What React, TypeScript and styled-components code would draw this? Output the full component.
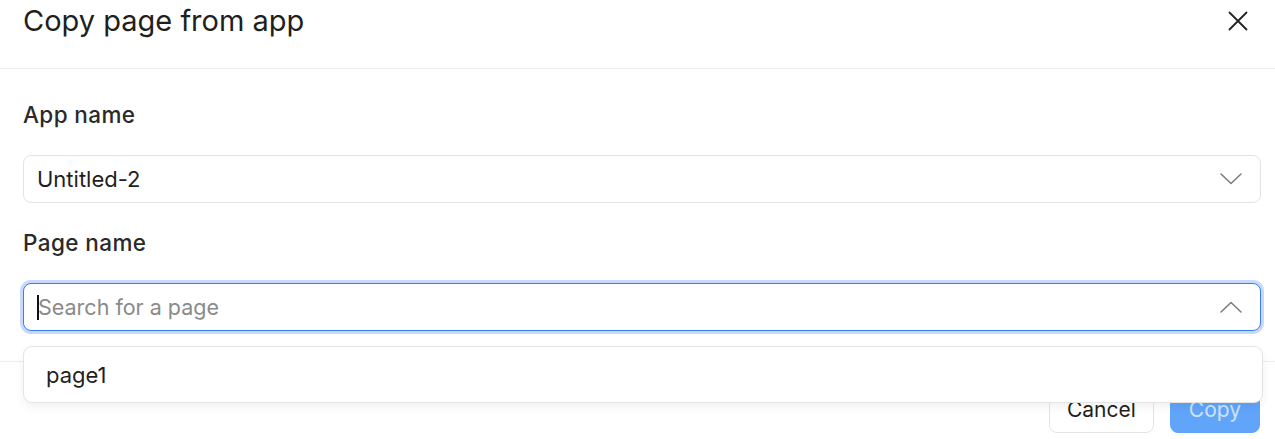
import styled, { createGlobalStyle } from 'styled-components';

const Global = createGlobalStyle`
  html, body {
    margin: 0;
    padding: 0;
    background: #ffffff;
  }
  body {
    font-family: Inter, 'Noto Sans', 'Liberation Sans', sans-serif;
    color: #1f1f1f;
  }
`;

// ─── Layout ──────────────────────────────────────────────────────────────────

const Modal = styled.div`
  width: 1275px;
  height: 439px;
  background: #fff;
  display: flex;
  flex-direction: column;
  overflow: hidden;
`;

const Header = styled.div`
  height: 69px;
  box-sizing: border-box;
  padding: 0 25px 27px 23px;
  display: flex;
  align-items: center;
  justify-content: space-between;
  border-bottom: 1px solid #ececec;
`;

const Title = styled.h2`
  margin: 0;
  font-size: 29px;
  line-height: 42px;
  font-weight: 400;
  color: #1f1f1f;
`;

const CloseBtn = styled.button`
  width: 24px;
  height: 24px;
  padding: 0;
  border: none;
  background: none;
  display: flex;
  align-items: center;
  justify-content: center;
  color: #222;
  cursor: pointer;
`;

const Body = styled.div`
  padding: 30px 14px 30px 23px;
  display: flex;
  flex-direction: column;
  gap: 24px;
`;

const Field = styled.div`
  display: flex;
  flex-direction: column;
  gap: 24px;
`;

const Label = styled.label`
  font-size: 22.5px;
  line-height: 32px;
  font-weight: 500;
  letter-spacing: 0.4px;
  color: #2a2a2a;
`;

const Control = styled.div`
  position: relative;
`;

const SelectBox = styled.div<{ $focused?: boolean }>`
  height: 48px;
  box-sizing: border-box;
  padding: 0 18px 0 13px;
  border-radius: 8px;
  border: 1px solid ${({ $focused }) => ($focused ? '#3b7cf0' : '#e3e3e3')};
  box-shadow: ${({ $focused }) => ($focused ? '0 0 0 3px #c8d9fb' : 'none')};
  display: flex;
  align-items: center;
  justify-content: space-between;
  background: #fff;
`;

const Value = styled.span`
  font-size: 22px;
  color: #1f1f1f;
`;

const InputLine = styled.div`
  display: flex;
  align-items: center;
`;

const Caret = styled.span`
  width: 2px;
  height: 25px;
  background: #111;
  margin-right: -1px;
`;

const Placeholder = styled.span`
  font-size: 21.5px;
  color: #8a8a8a;
`;

const Listbox = styled.ul`
  position: absolute;
  top: calc(100% + 15px);
  left: 0;
  right: -2px;
  margin: 0;
  padding: 0;
  list-style: none;
  height: 57px;
  box-sizing: border-box;
  border: 1px solid #e4e4e4;
  border-radius: 9px;
  background: #fff;
  box-shadow: 0 4px 10px rgba(0, 0, 0, 0.06);
  z-index: 2;
`;

const Option = styled.li`
  height: 55px;
  padding: 0 22px;
  display: flex;
  align-items: center;
  font-size: 22px;
  color: #1f1f1f;
`;

const Footer = styled.div`
  border-top: 1px solid #ececec;
  padding: 23px 15px 0;
  display: flex;
  justify-content: flex-end;
  gap: 16px;
`;

const Button = styled.button<{ $primary?: boolean }>`
  height: 48px;
  padding: 0 ${({ $primary }) => ($primary ? '18px' : '17px')};
  border-radius: 8px;
  font-family: inherit;
  font-size: 21px;
  border: 1px solid ${({ $primary }) => ($primary ? '#60a5fa' : '#e5e5e5')};
  background: ${({ $primary }) => ($primary ? '#60a5fa' : '#fff')};
  color: ${({ $primary }) => ($primary ? '#cfe3fd' : '#1f1f1f')};
`;

// ─── Icons ───────────────────────────────────────────────────────────────────

const XIcon = () => (
  <svg width="20" height="20" viewBox="0 0 20 20" fill="none">
    <path d="M1.5 1.5 L18.5 18.5 M18.5 1.5 L1.5 18.5" stroke="currentColor" strokeWidth="1.8" strokeLinecap="round" />
  </svg>
);

const Chevron = ({ up }: { up?: boolean }) => (
  <svg width="22" height="12" viewBox="0 0 22 12" fill="none">
    <path
      d={up ? 'M1 11 L11 1.5 L21 11' : 'M1 1 L11 10.5 L21 1'}
      stroke="#7a7a7a"
      strokeWidth="1.5"
      strokeLinecap="round"
      strokeLinejoin="round"
    />
  </svg>
);

// ─── Component ───────────────────────────────────────────────────────────────

export default function App() {
  const pages = ['page1'];

  return (
    <>
      <Global />
      <Modal>
        <Header>
          <Title>Copy page from app</Title>
          <CloseBtn aria-label="Close">
            <XIcon />
          </CloseBtn>
        </Header>

        <Body>
          <Field>
            <Label>App name</Label>
            <SelectBox>
              <Value>Untitled-2</Value>
              <Chevron />
            </SelectBox>
          </Field>

          <Field>
            <Label>Page name</Label>
            <Control>
              <SelectBox $focused>
                <InputLine>
                  <Caret />
                  <Placeholder>Search for a page</Placeholder>
                </InputLine>
                <Chevron up />
              </SelectBox>
              <Listbox>
                {pages.map((p) => (
                  <Option key={p}>{p}</Option>
                ))}
              </Listbox>
            </Control>
          </Field>
        </Body>

        <Footer>
          <Button>Cancel</Button>
          <Button $primary>Copy</Button>
        </Footer>
      </Modal>
    </>
  );
}
